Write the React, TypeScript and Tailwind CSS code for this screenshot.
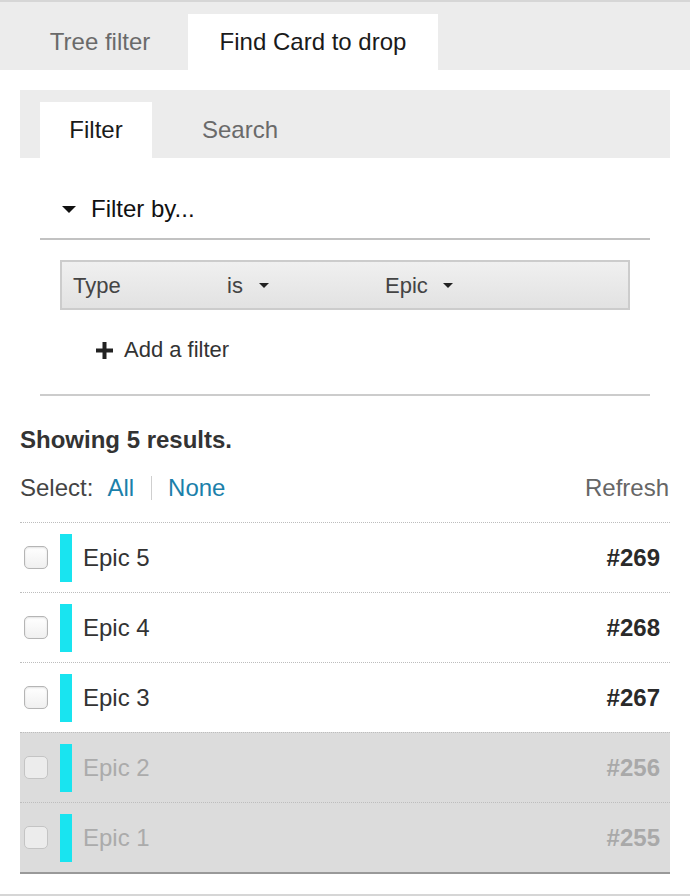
import React from "react";

const Caret = ({ w = 10, h = 5, color = "#222" }: { w?: number; h?: number; color?: string }) => (
  <svg width={w} height={h} viewBox={`0 0 ${w} ${h}`} className="block">
    <polygon points={`0,0 ${w},0 ${w / 2},${h}`} fill={color} />
  </svg>
);

const Plus = () => (
  <svg width="17" height="17" viewBox="0 0 17 17" className="block">
    <rect x="6.5" y="0" width="4" height="17" fill="#222" />
    <rect x="0" y="6.5" width="17" height="4" fill="#222" />
  </svg>
);

type Row = { name: string; num: string; disabled?: boolean };

const rows: Row[] = [
  { name: "Epic 5", num: "#269" },
  { name: "Epic 4", num: "#268" },
  { name: "Epic 3", num: "#267" },
  { name: "Epic 2", num: "#256", disabled: true },
  { name: "Epic 1", num: "#255", disabled: true },
];

export default function App() {
  return (
    <div
      className="w-[690px] h-[896px] bg-white overflow-hidden flex flex-col border-t-2 border-b-2 border-[#d6d6d6]"
      style={{ fontFamily: '"Liberation Sans", Arial, sans-serif' }}
    >
      {/* Outer tab bar */}
      <div className="h-[68px] bg-[#ececec] flex items-end shrink-0">
        <div className="ml-[12px] w-[176px] h-[56px] flex items-center justify-center text-[24px] text-[#6a6a6a]">
          Tree filter
        </div>
        <div className="w-[250px] h-[56px] bg-white flex items-center justify-center text-[24px] text-[#1a1a1a]">
          Find Card to drop
        </div>
      </div>

      <div className="mx-[20px] mt-[20px] flex flex-col">
        {/* Inner tab bar */}
        <div className="h-[68px] bg-[#ececec] flex items-end pl-[20px]">
          <div className="w-[112px] h-[56px] bg-white flex items-center justify-center text-[24px] text-[#1a1a1a]">
            Filter
          </div>
          <div className="ml-[16px] w-[144px] h-[56px] flex items-center justify-center text-[24px] text-[#6a6a6a]">
            Search
          </div>
        </div>

        {/* Filter section */}
        <div className="mx-[20px] flex flex-col">
          <div className="h-[82px] flex items-end pb-[15px] pl-[22px] border-b-2 border-[#c2c2c2]">
            <div className="flex items-center h-[28px]">
              <Caret w={14} h={7} color="#111" />
              <span className="ml-[15px] text-[24px] leading-[28px] text-[#111]">Filter by...</span>
            </div>
          </div>

          <div className="mx-[20px] mt-[20px] h-[50px] border-2 border-[#cccccc] bg-gradient-to-b from-[#f0f0f0] to-[#e2e2e2] flex items-center pl-[11px] text-[22px] text-[#444]">
            <span className="w-[154px]">Type</span>
            <span className="w-[158px] flex items-center">
              is
              <span className="ml-[16px]">
                <Caret w={10} h={5} color="#222" />
              </span>
            </span>
            <span className="flex items-center">
              Epic
              <span className="ml-[15px]">
                <Caret w={10} h={5} color="#222" />
              </span>
            </span>
          </div>

          <div className="h-[86px] pt-[26px] pl-[56px] flex items-start border-b-2 border-[#cccccc]">
            <div className="h-[28px] flex items-center">
              <Plus />
              <span className="ml-[11px] text-[22px] leading-[28px] text-[#333]">Add a filter</span>
            </div>
          </div>
        </div>

        {/* Results */}
        <div className="mt-[30px] text-[24px] leading-[28px] font-bold text-[#333]">Showing 5 results.</div>
        <div className="mt-[20px] h-[28px] flex items-center text-[24px] leading-[28px]">
          <span className="text-[#444]">Select:</span>
          <span className="ml-[14px] text-[#1b80aa]">All</span>
          <span className="ml-[17px] w-px h-[24px] bg-[#cfcfcf]" />
          <span className="ml-[16px] text-[#1b80aa]">None</span>
          <span className="ml-auto mr-px text-[#666]">Refresh</span>
        </div>

        <div className="mt-[20px] flex flex-col border-b-2 border-[#999]">
          {rows.map((r) => (
            <div
              key={r.name}
              className={`h-[70px] border-t border-dotted border-[#bdbdbd] flex items-center pl-[4px] pr-[10px] ${
                r.disabled ? "bg-[#dcdcdc]" : "bg-white"
              }`}
            >
              <span
                className={`w-[24px] h-[23px] rounded-[5px] border ${
                  r.disabled
                    ? "border-[#c4c4c4] bg-[#ececec]"
                    : "border-[#b5b5b5] bg-gradient-to-b from-white to-[#f0f0f0] shadow-[inset_0_1px_2px_rgba(0,0,0,0.12)]"
                }`}
              />
              <span className="ml-[12px] w-[12px] h-[48px] bg-[#19e4f0]" />
              <span className={`ml-[11px] text-[24px] ${r.disabled ? "text-[#ababab]" : "text-[#333]"}`}>
                {r.name}
              </span>
              <span className={`ml-auto text-[24px] font-bold ${r.disabled ? "text-[#a9a9a9]" : "text-[#2a2a2a]"}`}>
                {r.num}
              </span>
            </div>
          ))}
        </div>
      </div>
    </div>
  );
}
